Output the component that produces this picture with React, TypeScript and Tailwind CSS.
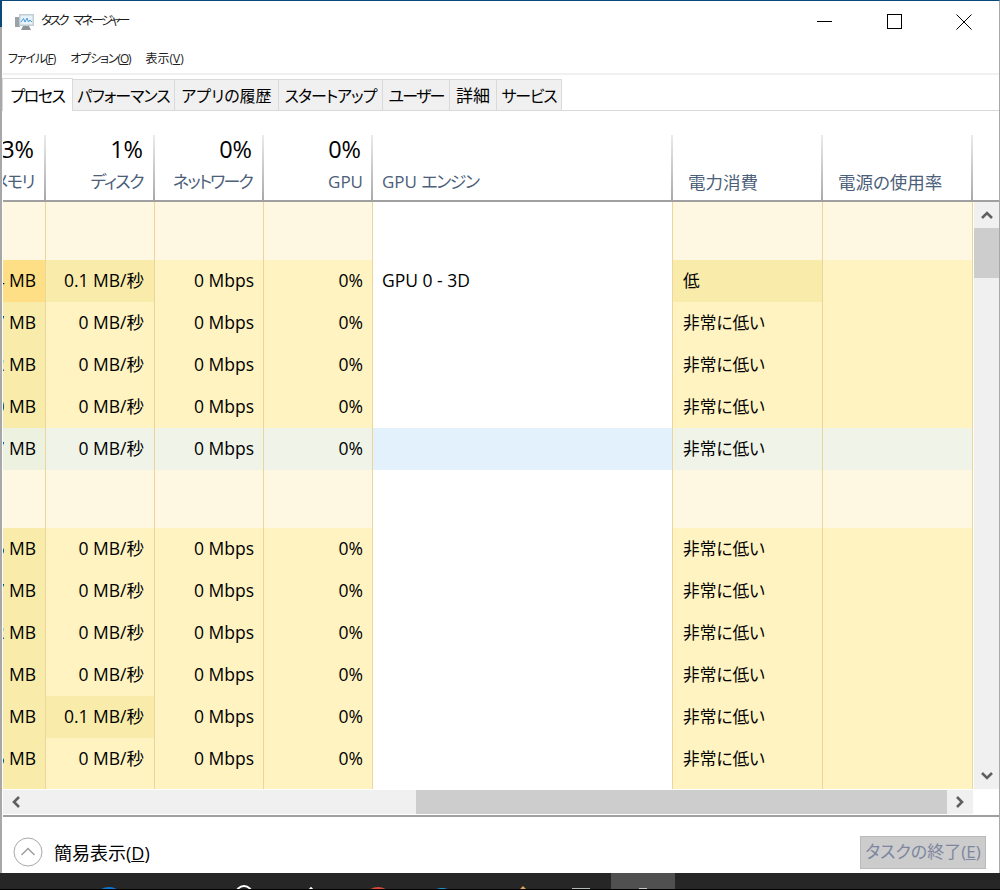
const rows = [
  { kind: 'group' },
  { kind: 'row', mem: '4 MB', memBg: 'bg-[#ffdf85]', disk: '0.1 MB/秒', diskBg: 'bg-[#f9ecaa]', engine: 'GPU 0 - 3D', power: '低', powerBg: 'bg-[#f9ecaa]' },
  { kind: 'row', mem: '7 MB' },
  { kind: 'row', mem: '2 MB' },
  { kind: 'row', mem: '0 MB' },
  { kind: 'row', mem: '7 MB', hover: true },
  { kind: 'group' },
  { kind: 'row', mem: '6 MB' },
  { kind: 'row', mem: '7 MB' },
  { kind: 'row', mem: '2 MB' },
  { kind: 'row', mem: '1 MB' },
  { kind: 'row', mem: 'MB', disk: '0.1 MB/秒', diskBg: 'bg-[#f9ecaa]' },
  { kind: 'row', mem: '6 MB' },
  { kind: 'tail' },
] as const;

type Row = {
  kind: 'group' | 'row' | 'tail';
  mem?: string;
  memBg?: string;
  disk?: string;
  diskBg?: string;
  engine?: string;
  power?: string;
  powerBg?: string;
  hover?: boolean;
};

const tabs = [
  { label: 'パフォーマンス', w: 'w-[102px]', type: 'text-[16px] tracking-[-1px]' },
  { label: 'アプリの履歴', w: 'w-[104px]', type: 'text-[16px]' },
  { label: 'スタートアップ', w: 'w-[104px]', type: 'text-[16px] tracking-[-1px]' },
  { label: 'ユーザー', w: 'w-[67px]', type: 'text-[16px] tracking-[-1.75px]' },
  { label: '詳細', w: 'w-[47px]', type: 'text-[17px]' },
  { label: 'サービス', w: 'w-[65px]', type: 'text-[16px] tracking-[-1.25px]' },
];

const cellLine = 'border-r border-[#ecd59a]';
const headerLine = 'border-r-2 border-transparent [border-image:linear-gradient(#ececec,#a8a8a8)_1]';

function AppIcon() {
  return (
    <svg width="22" height="20" viewBox="0 0 22 20" className="shrink-0">
      <rect x="1" y="5" width="5" height="10" fill="#9aa3a8" />
      <rect x="5" y="2" width="15" height="12" fill="#c3ccd2" />
      <rect x="6.5" y="3.5" width="12" height="9" fill="#e6f3fb" />
      <path d="M7 10 L9.5 6.5 L11 10 L13 6 L14.5 10 L16 8 L18 10" fill="none" stroke="#4a9bd6" strokeWidth="1" />
      <path d="M9 14 h6 l2 4 h-10 z" fill="#8d9498" />
    </svg>
  );
}

function Chevron({ d }: { d: string }) {
  return (
    <svg width="12" height="12" viewBox="0 0 12 12">
      <path d={d} fill="none" stroke="#606060" strokeWidth="2.6" />
    </svg>
  );
}

function HeaderCol({ w, pct, label, labelPad = '', track = '' }: { w: string; pct: string; label: string; labelPad?: string; track?: string }) {
  return (
    <div className={`${w} shrink-0 h-full flex flex-col items-end overflow-hidden pr-[10px] ${headerLine}`}>
      <div className="h-[28px] text-[23.5px] leading-[28px] text-black whitespace-nowrap">{pct}</div>
      <div className={`mt-[7px] text-[17px] leading-[24px] text-[#4c607a] whitespace-nowrap ${track} ${labelPad}`}>{label}</div>
    </div>
  );
}

function TableRow({ row }: { row: Row }) {
  if (row.kind === 'group' || row.kind === 'tail') {
    const h = row.kind === 'tail' ? 'h-[9px]' : 'h-[58px]';
    const bg = row.kind === 'tail' ? 'bg-[#fff3c2]' : 'bg-[#fef8e3]';
    return (
      <div className={`flex ${h}`}>
        <div className={`w-[43px] ${row.kind === 'tail' ? 'bg-[#f9ecaa]' : bg} ${cellLine}`} />
        <div className={`w-[109px] ${bg} ${cellLine}`} />
        <div className={`w-[109px] ${bg} ${cellLine}`} />
        <div className={`w-[109px] ${bg} ${cellLine}`} />
        <div className={`w-[300px] bg-white ${cellLine}`} />
        <div className={`w-[150px] ${bg} ${cellLine}`} />
        <div className={`w-[150px] ${bg} ${cellLine}`} />
      </div>
    );
  }
  const base = row.hover ? 'bg-[#eff3e8]' : 'bg-[#fff3c2]';
  const memBg = row.memBg ?? (row.hover ? 'bg-[#edf1e0]' : 'bg-[#f9ecaa]');
  const num = 'flex items-center justify-end overflow-hidden whitespace-nowrap pb-[2px] text-[17.5px] text-black';
  return (
    <div className="flex h-[42px]">
      <div className={`w-[43px] pr-[9px] ${num} ${memBg} ${cellLine}`}>{row.mem}</div>
      <div className={`w-[109px] pr-[10px] ${num} ${row.diskBg ?? base} ${cellLine}`}>{row.disk ?? '0 MB/秒'}</div>
      <div className={`w-[109px] pr-[9px] ${num} ${base} ${cellLine}`}>0 Mbps</div>
      <div className={`w-[109px] pr-[9px] ${num} ${base} ${cellLine}`}>0%</div>
      <div className={`w-[300px] pl-[9px] pb-[2px] flex items-center text-[17.5px] text-black ${row.hover ? 'bg-[#e3f1fc]' : 'bg-white'} ${cellLine}`}>{row.engine}</div>
      <div className={`w-[150px] pl-[10px] flex items-center text-[16.7px] text-black ${row.powerBg ?? base} ${cellLine}`}>{row.power ?? '非常に低い'}</div>
      <div className={`w-[150px] ${base} ${cellLine}`} />
    </div>
  );
}

export default function App() {
  return (
    <div className="w-[1000px] h-[890px] overflow-hidden flex flex-col bg-white font-['Open_Sans','Noto_Sans_CJK_JP',sans-serif] [font-feature-settings:'palt']">
      <div className="flex-1 min-h-0 flex">
        <div className="w-[2px] shrink-0 bg-[linear-gradient(#0b4a78_27px,#a8a8a8_27px)]" />
        <div className="flex-1 min-w-0 flex flex-col pl-px border-t border-t-[#0b4a78] border-r border-r-[#a8a8a8]">
          {/* title bar */}
          <div className="h-[41px] shrink-0 flex items-center">
            <div className="ml-[11px] mr-[5px] flex items-center"><AppIcon /></div>
            <span className="text-[12.5px] tracking-[-2.4px] [word-spacing:5px] text-[#1a1a1a]">タスク マネージャー</span>
            <div className="ml-auto flex items-center">
              <div className="w-[70px] h-[36px] flex items-center justify-center"><div className="w-[15px] h-px bg-black" /></div>
              <div className="w-[70px] h-[36px] flex items-center justify-center"><div className="w-[15px] h-[15px] border border-black" /></div>
              <div className="w-[70px] h-[36px] flex items-center justify-center">
                <svg width="16" height="16" viewBox="0 0 16 16"><path d="M0.5 0.5 L15.5 15.5 M15.5 0.5 L0.5 15.5" stroke="#000" strokeWidth="1" /></svg>
              </div>
            </div>
          </div>
          {/* menu */}
          <div className="h-[33px] shrink-0 flex items-center gap-[15px] pl-[5px] pt-[3px] text-[12px] text-[#222] border-b-2 border-[#f0f0f0]">
            <span className="tracking-[-1.1px]">ファイル(<u>F</u>)</span>
            <span className="tracking-[-1.1px]">オプション(<u>O</u>)</span>
            <span>表示(<u>V</u>)</span>
          </div>
          {/* tabs */}
          <div className="h-[36px] shrink-0 flex items-end border-b border-[#d9d9d9]">
            <div className="w-[71px] h-[33px] -ml-px -mb-px pt-[2px] bg-white border-x border-t border-[#d9d9d9] border-b-0 text-[16px] tracking-[-1.5px] text-black flex items-center justify-center">プロセス</div>
            {tabs.map((t) => (
              <div key={t.label} className={`${t.w} ${t.type} h-[31px] pt-[2px] bg-[#f0f0f0] border-t border-r border-[#d9d9d9] text-black flex items-center justify-center whitespace-nowrap`}>{t.label}</div>
            ))}
          </div>
          {/* column headers */}
          <div className="h-[24px] shrink-0" />
          <div className="h-[65px] shrink-0 flex">
            <HeaderCol w="w-[43px]" pct="3%" label="メモリ" track="tracking-[-1.5px]" />
            <HeaderCol w="w-[109px]" pct="1%" label="ディスク" track="tracking-[-1.5px]" />
            <HeaderCol w="w-[109px]" pct="0%" label="ネットワーク" track="tracking-[-1.8px]" />
            <HeaderCol w="w-[109px]" pct="0%" label="GPU" labelPad="-mr-[2px]" />
            <div className={`w-[300px] shrink-0 h-full pl-[9px] pt-[35px] text-[17px] leading-[24px] text-[#4c607a] ${headerLine}`}>GPU <span className="tracking-[-1.5px]">エンジン</span></div>
            <div className={`w-[150px] shrink-0 h-full pl-[15px] pt-[35px] text-[17.5px] leading-[24px] text-[#4c607a] ${headerLine}`}>電力消費</div>
            <div className={`w-[150px] shrink-0 h-full pl-[15px] pt-[35px] text-[17.5px] leading-[24px] text-[#4c607a] ${headerLine}`}>電源の使用率</div>
          </div>
          <div className="h-[2px] shrink-0 bg-[#a0a0a0]" />
          {/* table + vertical scrollbar */}
          <div className="h-[587px] shrink-0 flex">
            <div className="w-[970px] shrink-0 overflow-hidden flex flex-col">
              {(rows as readonly Row[]).map((r, i) => <TableRow key={i} row={r} />)}
            </div>
            <div className="flex-1 flex flex-col bg-[#f0f0f0] ml-px">
              <div className="h-[26px] flex items-center justify-center"><Chevron d="M1 9 L6 4 L11 9" /></div>
              <div className="h-[50px] bg-[#cdcdcd]" />
              <div className="flex-1" />
              <div className="h-[26px] flex items-center justify-center"><Chevron d="M1 3 L6 8 L11 3" /></div>
            </div>
          </div>
          {/* horizontal scrollbar */}
          <div className="h-[26px] shrink-0 flex pt-px">
            <div className="w-[970px] h-[24px] flex bg-[#f0f0f0]">
              <div className="w-[26px] flex items-center justify-center"><Chevron d="M9 1 L4 6 L9 11" /></div>
              <div className="w-[387px]" />
              <div className="w-[531px] bg-[#cdcdcd]" />
              <div className="w-[26px] flex items-center justify-center"><Chevron d="M3 1 L8 6 L3 11" /></div>
            </div>
          </div>
          <div className="h-[2px] shrink-0 bg-[#a0a0a0]" />
          {/* footer */}
          <div className="flex-1 flex items-center pl-[10px] pr-[13px]">
            <svg width="30" height="30" viewBox="0 0 30 30" className="mt-[14px] shrink-0">
              <circle cx="15" cy="15" r="14" fill="#fff" stroke="#a8a8a8" strokeWidth="1" />
              <path d="M8.5 18 L15 11.5 L21.5 18" fill="none" stroke="#9a9a9a" strokeWidth="1.4" />
            </svg>
            <span className="ml-[11px] mt-[16px] text-[18px] text-black">簡易表示(<u>D</u>)</span>
            <div className="ml-auto mt-[14px] w-[126px] h-[33px] bg-[#cccccc] border border-[#bababa] flex items-center justify-center text-[17px] text-[#7e86a0] whitespace-nowrap">タスクの終了(<u>E</u>)</div>
          </div>
        </div>
      </div>
      {/* taskbar, only the top edge of the icons shows */}
      <div className="h-[17px] shrink-0 bg-[#262626] flex overflow-hidden border-b border-black">
        <div className="ml-[94px] mt-[14px] w-[30px] h-[30px] rounded-full bg-[#0a78d4]" />
        <div className="ml-[111px] mt-[12px] w-[18px] h-[18px] rounded-full border-2 border-white" />
        <div className="ml-[48px] mt-[18px] w-[20px] h-[20px] rotate-45 bg-white" />
        <div className="ml-[42px] mt-[14px] w-[30px] h-[30px] rounded-full bg-[#d9483b]" />
        <div className="ml-[34px] mt-[15px] w-[30px] h-[30px] rounded-full bg-[#1e9ad6]" />
        <div className="ml-[59px] mt-[16px] w-[14px] h-[14px] bg-[#e0a458] rotate-45" />
        <div className="ml-[42px] mt-[15px] w-[18px] h-[10px] bg-[#b0bab8]" />
        <div className="ml-[21px] w-[64px] h-[17px] bg-[#505050] flex justify-center">
          <div className="mt-[15px] w-[8px] h-[8px] bg-[#c8c8c8]" />
        </div>
      </div>
    </div>
  );
}
